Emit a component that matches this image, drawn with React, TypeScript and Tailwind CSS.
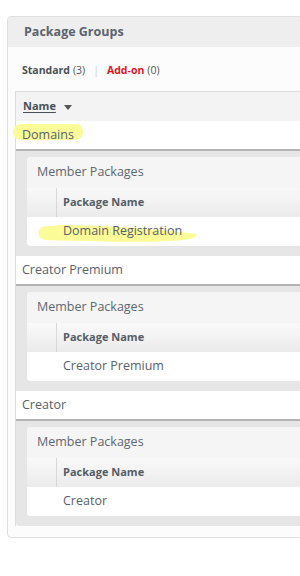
import React from "react";

const font = { fontFamily: '"Open Sans", "Noto Sans", sans-serif' };

function Group({ name, pkg, last, hl }: { name: string; pkg: string; last?: boolean; hl?: boolean }) {
  return (
    <div>
      <div className="relative h-[28px] flex items-center pl-[6px] text-[12.5px] text-[#59616b] bg-white">
        {hl && <span className="absolute left-[-3px] top-[3px] w-[70px] h-[16px] rounded-full bg-[#fbfb98]" />}
        <span className="relative">{name}</span>
      </div>
      <div className={`border-t-2 border-[#b3b3b3] bg-[#e6e6e6] pt-[6px] pb-[10px] pl-[11px] ${last ? "rounded-bl-[4px]" : ""}`}>
        <div className="rounded-[4px] bg-white overflow-hidden">
          <div className="h-[31px] flex items-center pl-[10px] bg-[#f5f5f5] text-[12.5px] text-[#5f6770]">Member Packages</div>
          <div className="h-[29px] flex bg-gradient-to-b from-[#f9f9f9] to-[#ebebeb]">
            <div className="w-[30px] border-r border-[#d8d8d8]" />
            <div className="flex items-center pl-[6px] text-[11px] font-bold text-[#555d66]">Package Name</div>
          </div>
          <div className="relative h-[29px] flex items-center pl-[36px] text-[12.5px] text-[#59616b] bg-white">
            {hl && (
              <svg className="absolute left-[9px] top-[0px]" width="170" height="30" viewBox="0 0 170 30">
                <path d="M6 10 C 30 5, 125 12, 160 17 C 165 24, 130 27, 10 23 C 1 22, 1 12, 6 10 Z" fill="#fbfb98" />
              </svg>
            )}
            <span className="relative">{pkg}</span>
          </div>
        </div>
      </div>
    </div>
  );
}

export default function App() {
  return (
    <div className="w-[300px] h-[576px] overflow-hidden bg-white pt-[16px] pl-[7px]" style={font}>
      <div className="w-[320px] border border-[#dedede] rounded-[4px] bg-[#fcfcfc] overflow-hidden">
        <div className="h-[30px] bg-[#eeeeee] flex items-center pl-[16px] text-[12.5px] font-bold text-[#5a636e]">Package Groups</div>
        <div className="px-[7px] pb-[11px]">
          <div className="h-[44px] flex items-center pl-[7px] text-[10.5px] pt-[4px]">
            <span className="font-bold text-[#4a4f55]">Standard</span>
            <span className="text-[#555] ml-[3px]">(3)</span>
            <span className="text-[#d0d0d0] mx-[8px]">|</span>
            <span className="font-bold text-[#e0141e]">Add-on</span>
            <span className="text-[#555] ml-[3px]">(0)</span>
          </div>
          <div className="border-l border-t border-[#dcdcdc]">
            <div className="h-[29px] bg-[#f3f3f3] flex items-center pl-[7px]">
              <span className="text-[11px] font-bold text-[#4a5058] underline underline-offset-2">Name</span>
              <svg className="ml-[8px] mt-[2px]" width="8" height="5" viewBox="0 0 8 5">
                <path d="M0 0 L8 0 L4 5 Z" fill="#555" />
              </svg>
            </div>
            <Group name="Domains" pkg="Domain Registration" hl />
            <Group name="Creator Premium" pkg="Creator Premium" />
            <Group name="Creator" pkg="Creator" last />
          </div>
        </div>
      </div>
    </div>
  );
}
